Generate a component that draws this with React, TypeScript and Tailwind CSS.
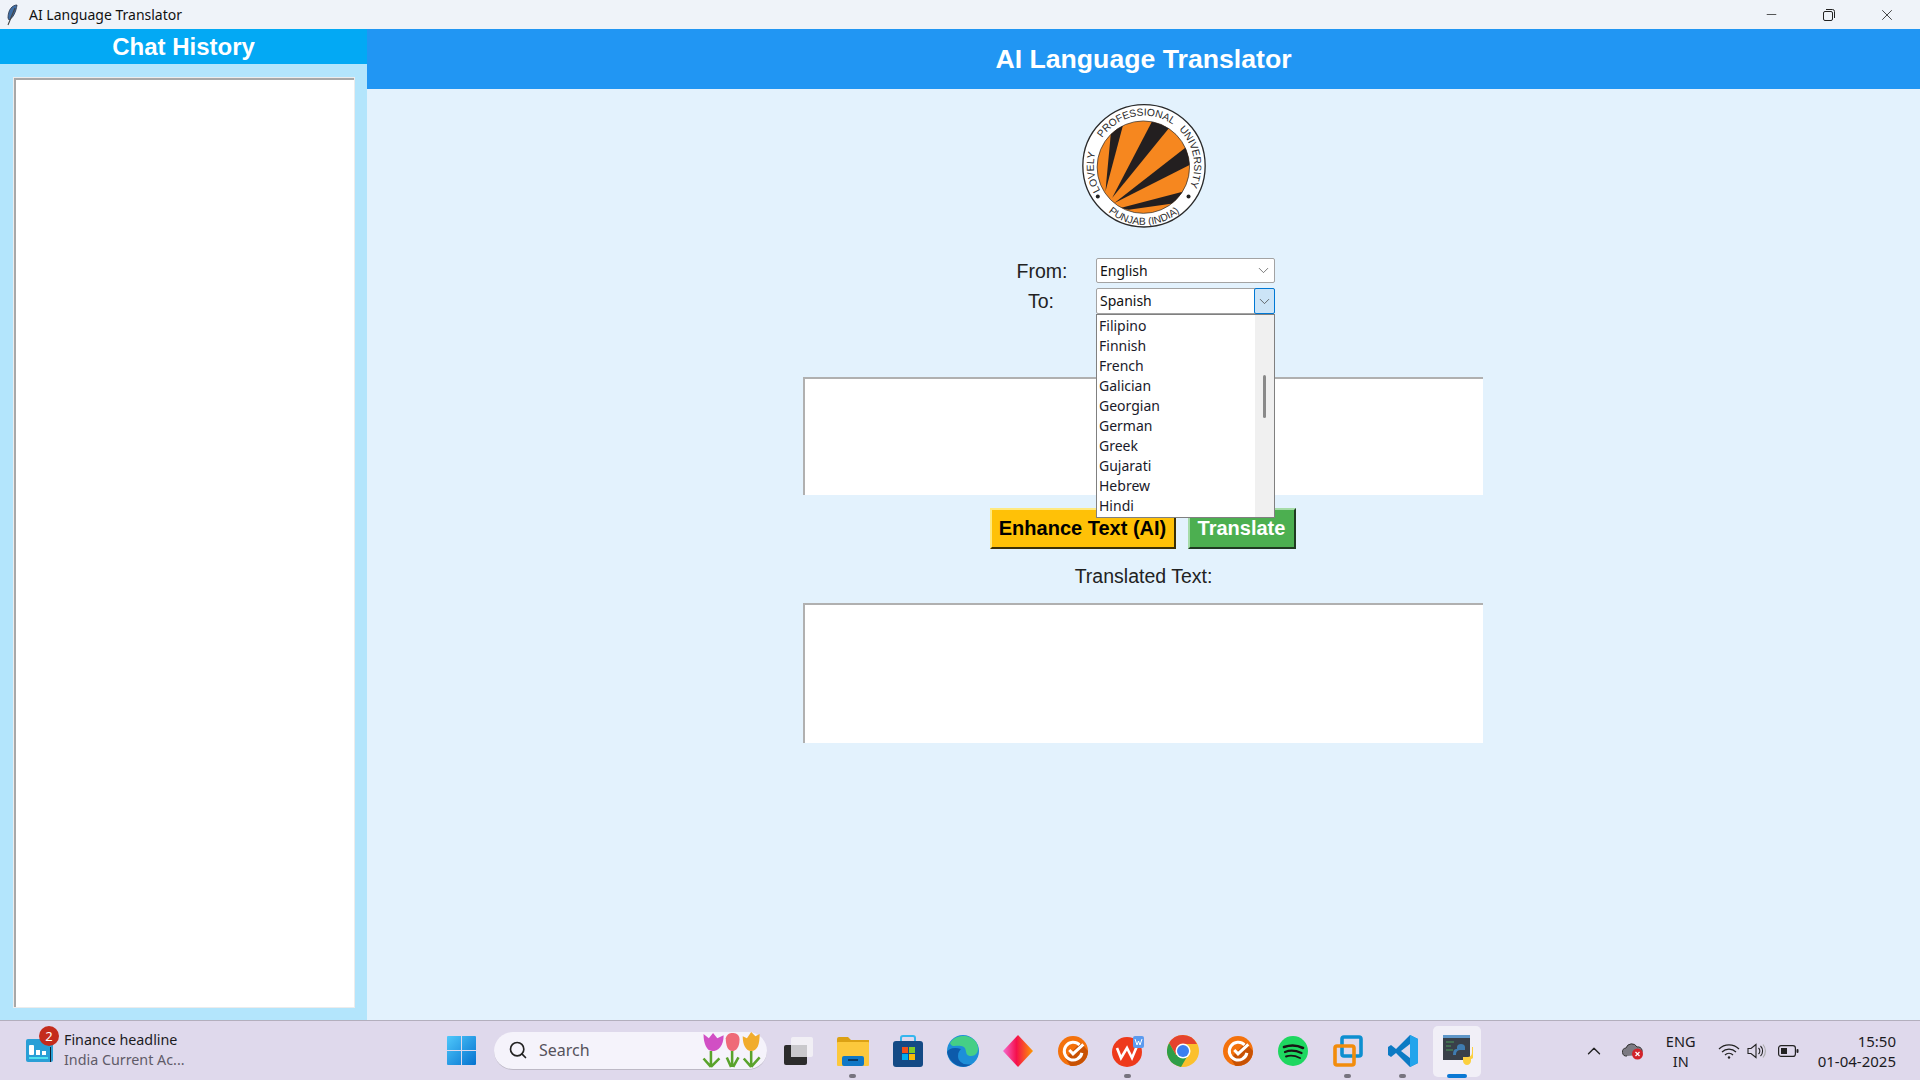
import React from "react";
import { Search, ChevronDown, ChevronUp, Minus, X } from "lucide-react";

const languages = ["Filipino", "Finnish", "French", "Galician", "Georgian", "German", "Greek", "Gujarati", "Hebrew", "Hindi"];
const ui = "font-['Noto_Sans',sans-serif]";
const arial = "font-['Liberation_Sans',Arial,sans-serif]";

const Logo = () => (
  <svg viewBox="125 42 372 373" className="w-[124px] h-[124px] block" aria-label="Lovely Professional University logo">
    <defs>
      <clipPath id="disc"><circle cx="309" cy="232" r="139" /></clipPath>
      <path id="ringTop" d="M311 379 A151 151 0 1 1 311 77 A151 151 0 1 1 311 379" />
      <path id="ringBottom" d="M145 240 A166 166 0 0 0 477 240" />
    </defs>
    <circle cx="311" cy="228" r="184" fill="#fff" stroke="#2a2a2a" strokeWidth="4" />
    <circle cx="309" cy="232" r="139" fill="#f6871f" stroke="#222" strokeWidth="2" />
    <g clipPath="url(#disc)" fill="#231f20">
      <polygon points="195,305 215,90 252,90" />
      <polygon points="215,325 340,85 390,110" />
      <polygon points="222,340 440,170 455,222" />
      <polygon points="240,355 430,305 408,340 265,360" />
    </g>
    <g fill="#2a2a2a" fontSize="31" fontFamily="Liberation Sans, sans-serif">
      <text textAnchor="middle"><textPath href="#ringTop" startOffset="23%">LOVELY</textPath></text>
      <text textAnchor="middle"><textPath href="#ringTop" startOffset="47%">PROFESSIONAL</textPath></text>
      <text textAnchor="middle"><textPath href="#ringTop" startOffset="72%">UNIVERSITY</textPath></text>
      <text textAnchor="middle"><textPath href="#ringBottom" startOffset="50%">PUNJAB (INDIA)</textPath></text>
    </g>
    <circle cx="172" cy="320" r="6" fill="#222" />
    <circle cx="445" cy="320" r="6" fill="#222" />
  </svg>
);

const Feather = () => (
  <svg viewBox="0 0 12 22" className="w-[12px] h-[22px]">
    <path d="M11 1 C6 1 2 6 2 14 L3 16 C7 14 10 8 11 1Z" fill="#3f6ea5" stroke="#26324a" strokeWidth=".8" />
    <path d="M9 4 L2 21" stroke="#444" strokeWidth="1.1" fill="none" />
  </svg>
);

const WinLogo = () => (
  <svg viewBox="0 0 29 29" className="w-[29px] h-[29px] shrink-0">
    <defs>
      <linearGradient id="win" x1="0" y1="0" x2="1" y2="1">
        <stop offset="0" stopColor="#4fc8fb" />
        <stop offset="1" stopColor="#0572cf" />
      </linearGradient>
    </defs>
    <path d="M1 0H14V14H0V1a1 1 0 0 1 1-1ZM15 0H28a1 1 0 0 1 1 1V14H15ZM0 15H14V29H1a1 1 0 0 1-1-1ZM15 15H29V28a1 1 0 0 1-1 1H15Z" fill="url(#win)" />
  </svg>
);

const Tulips = () => (
  <svg viewBox="0 0 60 34" className="w-[64px] h-[36px]">
    <g stroke="#5aa32c" strokeWidth="2.4" fill="none">
      <path d="M12 18V33M5 25L12 33M20 25L12 33" />
      <path d="M32 18V33M27 24L31 33M38 24L33 33" />
      <path d="M50 18V33M43 25L50 33M58 24L50 33" />
    </g>
    <path d="M5 2 L10 6 L14 1 L18 6 L24 3 C24 13 19 18 13 18 C8 18 5 11 5 2Z" fill="#d14fc4" />
    <path d="M26 6 C27 2 30 1 32 1 C35 1 39 2 39 7 C39 14 36 18 32 18 C28 18 26 13 26 6Z" fill="#ef6a78" />
    <path d="M42 4 L46 6 L50 0 L54 4 L58 2 C58 12 56 18 50 18 C45 18 42 12 42 4Z" fill="#f1ac2c" />
  </svg>
);

const TaskView = () => (
  <svg viewBox="0 0 30 30" className="w-[30px] h-[30px]">
    <rect x="1" y="9" width="23" height="20" rx="2" fill="#2c2c2c" />
    <rect x="8" y="1" width="22" height="20" rx="2" fill="#f5f4f8" fillOpacity=".8" />
    <rect x="8" y="9" width="16" height="12" fill="#c9c8cc" />
  </svg>
);

const Explorer = () => (
  <svg viewBox="0 0 32 30" className="w-[32px] h-[30px]">
    <path d="M0 3a2 2 0 0 1 2-2h9l3 3h18v6H0Z" fill="#dca114" />
    <rect x="0" y="6" width="32" height="24" rx="1" fill="#fcc83c" />
    <rect x="5" y="20" width="22" height="10" rx="2" fill="#0f78c6" />
    <rect x="11" y="23" width="10" height="2" fill="#083b66" />
  </svg>
);

const Store = () => (
  <svg viewBox="0 0 30 32" className="w-[30px] h-[32px]">
    <path d="M8 7V3a2 2 0 0 1 2-2h10a2 2 0 0 1 2 2v4" fill="none" stroke="#35b6ee" strokeWidth="2" />
    <rect x="0" y="6" width="30" height="26" rx="3" fill="#144a85" />
    <rect x="9" y="12" width="6" height="6" fill="#f1511b" />
    <rect x="16" y="12" width="6" height="6" fill="#80cc28" />
    <rect x="9" y="19" width="6" height="6" fill="#00adef" />
    <rect x="16" y="19" width="6" height="6" fill="#fbbc09" />
  </svg>
);

const Edge = () => (
  <svg viewBox="0 0 32 32" className="w-[32px] h-[32px]">
    <circle cx="16" cy="16" r="16" fill="#1d8fd8" />
    <path d="M3 8 C8 0 22 -2 29 7 C33 13 31 21 24 21 C16 21 22 12 14 11 C9 10 5 13 3 8Z" fill="#45cf86" />
    <path d="M0 17 C2 28 14 36 25 29 C17 31 11 27 11 21 C11 17 13 15 14 14 C8 12 2 13 0 17Z" fill="#0d5bab" />
  </svg>
);

const Diamond = () => (
  <svg viewBox="0 0 30 32" className="w-[30px] h-[32px]">
    <defs>
      <linearGradient id="dia" x1="0" y1="0" x2="1" y2="0">
        <stop offset="0" stopColor="#f56ad0" />
        <stop offset=".45" stopColor="#f5104c" />
        <stop offset="1" stopColor="#fd9a00" />
      </linearGradient>
    </defs>
    <path d="M15 0L30 16L15 32L0 16Z" fill="url(#dia)" />
  </svg>
);

const Grammar = () => (
  <svg viewBox="0 0 32 32" className="w-[30px] h-[32px]">
    <circle cx="16" cy="16" r="16" fill="#f4720c" />
    <path d="M24 7 L32 16 A16 16 0 0 1 13 31.7 L8 24Z" fill="#c85204" />
    <path d="M23 9.5 A9.5 9.5 0 1 0 25.5 18" fill="none" stroke="#fff" strokeWidth="3.2" />
    <path d="M12 15 L16 19 L27 9" fill="none" stroke="#fff" strokeWidth="3.2" />
  </svg>
);

const Wps = () => (
  <svg viewBox="0 0 34 34" className="w-[34px] h-[34px] translate-x-[1px]">
    <circle cx="15" cy="18" r="15" fill="#ee3a1b" />
    <path d="M5 14L9 24L15 14L20 24L25 12" fill="none" stroke="#fff" strokeWidth="2.6" />
    <rect x="21" y="2" width="11" height="12" rx="2" fill="#5b9bef" />
    <path d="M23 5L25 11L26.5 7L28 11L30 5" fill="none" stroke="#fff" strokeWidth="1" />
  </svg>
);

const Chrome = () => (
  <svg viewBox="0 0 32 32" className="w-[32px] h-[32px]">
    <circle cx="16" cy="16" r="16" fill="#fbc02d" />
    <path d="M16 0A16 16 0 0 0 2.1 8L9 20L16 9H30A16 16 0 0 0 16 0Z" fill="#e5432f" />
    <path d="M2.1 8A16 16 0 0 0 14 31.9L21 20L9 20Z" fill="#2f9e48" />
    <circle cx="16" cy="16" r="7.5" fill="#fff" />
    <circle cx="16" cy="16" r="6" fill="#3b7ff0" />
  </svg>
);

const Spotify = () => (
  <svg viewBox="0 0 30 30" className="w-[30px] h-[30px]">
    <circle cx="15" cy="15" r="15" fill="#1ed760" />
    <g fill="none" stroke="#191414" strokeLinecap="round">
      <path d="M6 11C12 9 19 9 25 12" strokeWidth="2.6" />
      <path d="M7 16C12 14 19 15 23.5 17" strokeWidth="2.2" />
      <path d="M8 20.5C12 19 18 20 22 22" strokeWidth="1.9" />
    </g>
  </svg>
);

const VMware = () => (
  <svg viewBox="0 0 30 32" className="w-[30px] h-[32px]">
    <rect x="9" y="2" width="19" height="19" rx="2" fill="none" stroke="#0d8fd0" strokeWidth="3.6" />
    <rect x="2" y="11" width="19" height="19" rx="2" fill="none" stroke="#f28c0c" strokeWidth="3.6" />
  </svg>
);

const VSCode = () => (
  <svg viewBox="0 0 30 32" className="w-[30px] h-[32px]">
    <path d="M22 0L30 4V28L22 32L8 18L3 22L0 20V12L3 10L8 14Z" fill="#0c7ac4" />
    <path d="M22 0L30 4V28L22 32Z" fill="#23a4ec" />
    <path d="M22 9L13 16L22 23Z" fill="#dfd9ec" />
  </svg>
);

const PythonApp = () => (
  <svg viewBox="0 0 30 32" className="w-[30px] h-[32px]">
    <rect x="0" y="0" width="27" height="25" fill="#394049" />
    <rect x="0" y="0" width="27" height="3" fill="#5f97c9" />
    <path d="M3 7h8M3 11h5M3 15h7" stroke="#4d9a5a" strokeWidth="1" />
    <path d="M13 20c0-4 2-5 5-5h4v-3c0-2-2-3-4-3s-4 1-4 3v2h-1c-2 0-3 2-3 6Z" fill="#3f7cb0" />
    <path d="M29 17c0 4-2 5-5 5h-4v4c0 2 2 4 4 4s4-2 4-4v-2c2 0 4-3 4-7s-1-5-3-5Z" fill="#fcd03f" />
  </svg>
);

const taskIcons: { icon: React.ReactNode; dot?: boolean; active?: boolean }[] = [
  { icon: <TaskView /> },
  { icon: <Explorer />, dot: true },
  { icon: <Store /> },
  { icon: <Edge /> },
  { icon: <Diamond /> },
  { icon: <Grammar /> },
  { icon: <Wps />, dot: true },
  { icon: <Chrome /> },
  { icon: <Grammar /> },
  { icon: <Spotify /> },
  { icon: <VMware />, dot: true },
  { icon: <VSCode />, dot: true },
  { icon: <PythonApp />, active: true },
];

const Combo = ({ value, open }: { value: string; open?: boolean }) => (
  <div className={`${ui} relative w-[179px] flex items-stretch bg-white border border-[#a3a3a3] rounded-[2px] text-[14px] text-[#111] ${open ? "h-[26px]" : "h-[25px]"}`}>
    <span className="flex-1 pl-[3px] leading-[23px]">{value}</span>
    {open ? (
      <span className="w-[21px] -my-px -mr-px flex items-center justify-center bg-[#cce4f7] border border-[#0078d4] rounded-[2px]">
        <ChevronDown size={17} strokeWidth={1.1} className="text-[#444]" />
      </span>
    ) : (
      <span className="w-[20px] flex items-center justify-center pr-[2px]">
        <ChevronDown size={17} strokeWidth={1.1} className="text-[#555]" />
      </span>
    )}
  </div>
);

const TextBox = ({ height }: { height: string }) => (
  <div className={`w-[680px] mr-[1px] bg-white border-t-2 border-l-2 border-[#b0b0b0] ${height}`} />
);

export default function App() {
  return (
    <div className="w-[1920px] h-[1080px] flex flex-col overflow-hidden bg-[#e3f2fd]">
      <div className={`${ui} h-[29px] shrink-0 flex items-center bg-[#eff3f9] text-[14px] text-[#111]`}>
        <span className="ml-[6px] w-[23px]"><Feather /></span>
        <span>AI Language Translator</span>
        <div className="ml-auto mr-[3px] flex items-center text-[#222]">
          <span className="w-[58px] flex justify-center"><Minus size={15} strokeWidth={1.2} /></span>
          <span className="w-[58px] flex justify-center">
            <svg viewBox="0 0 12 12" className="w-[12px] h-[12px]" fill="none" stroke="#222" strokeWidth="1">
              <rect x=".5" y="2.5" width="9" height="9" rx="1.5" />
              <path d="M3 .5h6.5a2 2 0 0 1 2 2V9" />
            </svg>
          </span>
          <span className="w-[59px] flex justify-center pr-[2px]"><X size={18} strokeWidth={1.1} /></span>
        </div>
      </div>

      <div className="flex-1 flex min-h-0">
        <aside className="w-[367px] shrink-0 flex flex-col bg-[#b3e5fc]">
          <div className={`${arial} h-[35px] bg-[#03a9f4] text-center text-[24px] font-bold leading-[36px] text-white`}>Chat History</div>
          <div className="flex-1 pt-[13px] pl-[13px] pr-[12px] pb-[12px]">
            <div className="h-full border border-[#ececec]">
              <div className="h-full bg-white border-t-2 border-l-2 border-[#a8a8a8]" />
            </div>
          </div>
        </aside>

        <main className="flex-1 flex flex-col items-center">
          <div className={`${arial} w-full h-[60px] bg-[#2196f3] flex items-center justify-center text-[26.67px] font-bold text-white`}>AI Language Translator</div>
          <div className="mt-[15px]"><Logo /></div>
          <div className={`${arial} mt-[30px] w-[263px] grid grid-cols-[60px_179px] gap-x-[24px] gap-y-[5px] items-center text-[19.5px] leading-[23px] text-[#222]`}>
            <span className="text-center pt-[2px]">From:</span>
            <Combo value="English" />
            <span className="text-center -ml-[2px]">To:</span>
            <div className="relative">
              <Combo value="Spanish" open />
              <div className={`${ui} absolute left-0 top-[26px] z-10 w-[179px] h-[204px] flex bg-white border border-[#808080] text-[14px] text-[#1a1a2a]`}>
                <ul className="flex-1 pt-px pl-[2px]">
                  {languages.map((l) => (
                    <li key={l} className="h-[20px] leading-[20px]">{l}</li>
                  ))}
                </ul>
                <div className="w-[19px] bg-[#f0f0f0] pt-[60px] flex justify-center">
                  <span className="block w-[3px] h-[43px] bg-[#8a8a8a] rounded-full" />
                </div>
              </div>
            </div>
          </div>
          <div className="mt-[63px]"><TextBox height="h-[118px]" /></div>
          <div className={`${arial} mt-[13px] -ml-[2px] flex gap-[12px] text-[20px] font-bold`}>
            <button className="w-[186px] h-[41px] pb-[2px] bg-[#ffc107] text-black border-2 border-t-[#ffe97f] border-l-[#ffe97f] border-b-[#3b2f05] border-r-[#3b2f05]">Enhance Text (AI)</button>
            <button className="w-[108px] h-[41px] pb-[2px] bg-[#4caf50] text-white border-2 border-t-[#a5dca8] border-l-[#a5dca8] border-b-[#1f3a21] border-r-[#1f3a21]">Translate</button>
          </div>
          <div className={`${arial} mt-[16px] leading-[23px] text-[19.5px] text-[#222]`}>Translated Text:</div>
          <div className="mt-[15px]"><TextBox height="h-[140px]" /></div>
        </main>
      </div>

      <footer className={`${ui} h-[60px] shrink-0 flex items-center bg-[#dfd9ec] border-t border-[#b3afbd] text-[#1b1b1f]`}>
        <div className="relative ml-[26px] w-[421px] flex items-center shrink-0">
          <svg viewBox="0 0 27 23" className="w-[27px] h-[23px]">
            <rect width="27" height="23" rx="2" fill="#2a9fd6" />
            <rect x="3" y="6" width="5" height="10" rx="1" fill="#fff" />
            <rect x="10" y="11" width="4" height="5" fill="#fff" />
            <rect x="16" y="12" width="4" height="4" fill="#fff" />
            <rect x="3" y="18" width="19" height="2" fill="#4fe0f0" />
            <rect x="24" y="8" width="1" height="15" fill="#123" />
          </svg>
          <span className="absolute left-[13px] -top-[6px] w-[20px] h-[20px] rounded-full bg-[#c42b1c] text-white text-[13px] leading-[20px] text-center">2</span>
          <div className="ml-[11px] -mt-[2px] text-[14.3px] leading-[20px]">
            <div>Finance headline</div>
            <div className="text-[#5f5b68]">India Current Ac...</div>
          </div>
        </div>
        <WinLogo />
        <div className="ml-[18px] w-[273px] h-[38px] shrink-0 flex items-center rounded-full bg-[#f5f3fb] border-b border-[#bdb9c6] pl-[14px] pr-[5px]">
          <Search size={20} strokeWidth={2} className="text-[#222]" />
          <span className="ml-[11px] text-[16px] text-[#55525c]">Search</span>
          <span className="ml-auto"><Tulips /></span>
        </div>
        <div className="ml-[3px] flex items-center">
          {taskIcons.map((t, i) => (
            <div key={i} className="relative w-[55px] h-[50px] flex items-center justify-center">
              {t.active && <span className="absolute left-[3px] top-0 w-[48px] h-[51px] rounded-[5px] bg-[#f1eff7]" />}
              <span className="relative flex">{t.icon}</span>
              {t.dot && <span className="absolute left-[24px] bottom-[-2px] w-[7px] h-[4px] rounded-full bg-[#77747f]" />}
              {t.active && <span className="absolute left-[17px] bottom-[-2px] w-[20px] h-[4px] rounded-full bg-[#0a78d4]" />}
            </div>
          ))}
        </div>
        <div className="ml-auto flex items-center">
          <ChevronUp size={22} strokeWidth={1.5} className="text-[#222]" />
          <svg viewBox="0 0 22 18" className="ml-[17px] w-[22px] h-[18px]">
            <path d="M5 14a4 4 0 0 1-1-8 6 6 0 0 1 11-1 4 4 0 0 1 2 8" fill="#7c7a82" stroke="#333" strokeWidth="1" />
            <circle cx="15.5" cy="12" r="5.5" fill="#d2232a" />
            <path d="M13.5 10l4 4M17.5 10l-4 4" stroke="#fff" strokeWidth="1.2" />
          </svg>
          <div className="ml-[19px] w-[36px] text-center text-[14.5px] leading-[20px]">
            <div>ENG</div>
            <div>IN</div>
          </div>
          <svg viewBox="0 0 22 16" className="ml-[19px] w-[22px] h-[16px]" fill="none" stroke="#222" strokeWidth="1.2">
            <path d="M1 6a14 14 0 0 1 20 0M4 9a10 10 0 0 1 14 0M7 12a5.5 5.5 0 0 1 8 0" />
            <circle cx="11" cy="14.5" r="1.2" fill="#222" stroke="none" />
          </svg>
          <svg viewBox="0 0 20 16" className="ml-[7px] w-[20px] h-[16px]" fill="none" stroke="#222" strokeWidth="1.1">
            <path d="M1 5.5H4L9 1.5V14.5L4 10.5H1Z" />
            <path d="M11.5 5a4 4 0 0 1 0 6M13.5 3a7 7 0 0 1 0 10" />
            <path d="M16 1.5a10 10 0 0 1 0 13" stroke="#aaa" />
          </svg>
          <svg viewBox="0 0 21 12" className="ml-[11px] w-[21px] h-[12px]">
            <rect x=".6" y=".6" width="16.8" height="10.8" rx="2.5" fill="none" stroke="#222" strokeWidth="1.2" />
            <rect x="3" y="3" width="6" height="6" fill="#222" />
            <rect x="18.5" y="4" width="2" height="4" rx="1" fill="#222" />
          </svg>
          <div className="ml-[19px] mr-[24px] text-right text-[15px] leading-[20px]">
            <div>15:50</div>
            <div>01-04-2025</div>
          </div>
        </div>
      </footer>
    </div>
  );
}
